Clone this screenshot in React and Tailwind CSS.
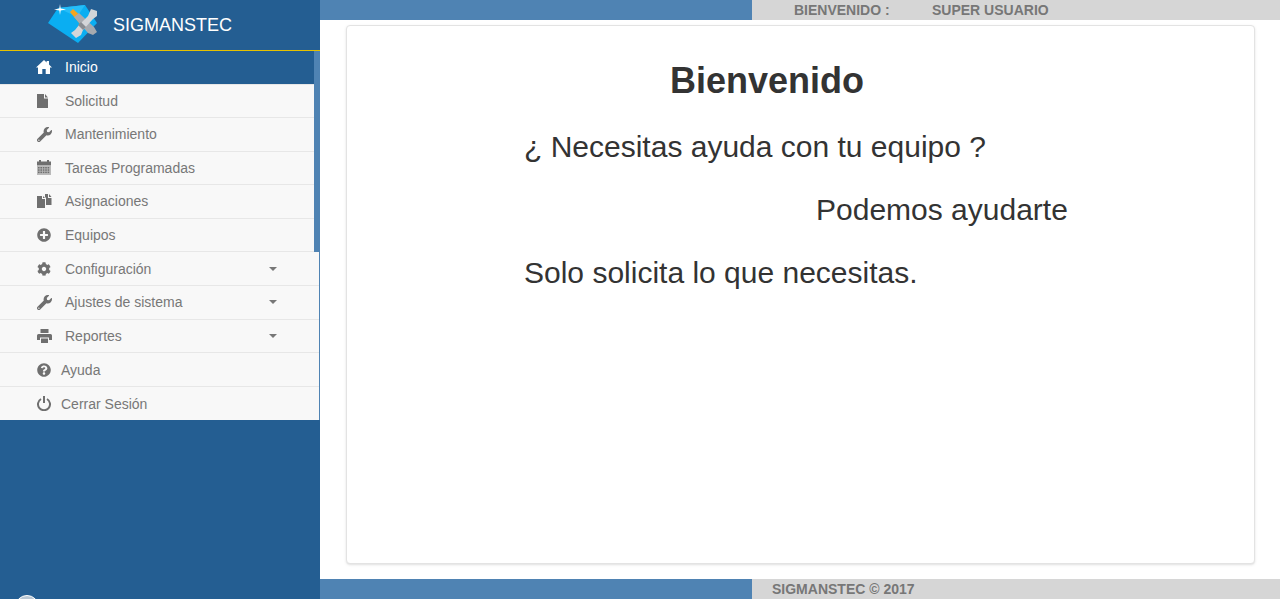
import React from "react";
import { FaWrench, FaPlusCircle, FaCog, FaQuestionCircle } from "react-icons/fa";

function HomeIcon({ className }) {
  return (
    <svg width="16" height="14" viewBox="0 0 16 14" className={className} fill="currentColor">
      <path d="M8 0 L10.6 2.4 V1 H13 V4.6 L16 7.5 H14 V14 H9.7 V9 H6.3 V14 H2 V7.5 H0 Z" />
    </svg>
  );
}

function FileIcon({ className }) {
  return (
    <svg width="12" height="14" viewBox="0 0 12 14" className={className} fill="currentColor">
      <path d="M0 0 H7 V4.5 H11 V14 H0 Z" />
      <path d="M8 0 L11 3.5 H8 Z" />
    </svg>
  );
}

function CalendarIcon({ className }) {
  const cells = [];
  for (let r = 0; r < 3; r++) {
    for (let c = 0; c < 5; c++) {
      cells.push(<rect key={`${r}-${c}`} x={1 + c * 2.4} y={7 + r * 2.3} width="1.6" height="1.5" />);
    }
  }
  return (
    <svg width="14" height="15" viewBox="0 0 14 15" className={className} fill="currentColor">
      <path d="M2 0 H4 V1.5 H10 V0 H12 V1.5 H14 V5.5 H0 V1.5 H2 Z" />
      <path d="M0 6 H14 V15 H0 Z" opacity="0.45" />
      {cells}
    </svg>
  );
}

function DuplicateIcon({ className }) {
  return (
    <svg width="15" height="14" viewBox="0 0 15 14" className={className} fill="currentColor">
      <path d="M0 2 H5 V5 H8 V14 H0 Z" />
      <path d="M6 2 L8 4 H6 Z" />
      <path d="M8 0 H11 V4 H14.5 V11 H9 V4 L8 3 Z" />
      <path d="M12 0 L14.5 3 H12 Z" />
    </svg>
  );
}

function PrintIcon({ className }) {
  return (
    <svg width="15" height="14" viewBox="0 0 15 14" className={className} fill="currentColor">
      <path d="M3.5 0 H11.5 V4 H3.5 Z" />
      <path d="M1.5 5 H13.5 Q15 5 15 6.5 V11 H12 V8.5 H3 V11 H0 V6.5 Q0 5 1.5 5 Z" />
      <path d="M4 9.5 H11 V14 H4 Z" />
    </svg>
  );
}

function PowerIcon({ className }) {
  return (
    <svg width="14" height="15" viewBox="0 0 14 15" className={className} fill="none" stroke="currentColor" strokeWidth="2">
      <path d="M4 3 A6 6 0 1 0 10 3" />
      <path d="M7 0 V7" />
    </svg>
  );
}

const topItems = [
  { label: "Solicitud", icon: <FileIcon /> },
  { label: "Mantenimiento", icon: <FaWrench size={15} /> },
  { label: "Tareas Programadas", icon: <CalendarIcon /> },
  { label: "Asignaciones", icon: <DuplicateIcon /> },
  { label: "Equipos", icon: <FaPlusCircle size={14} /> },
];

const subItems = [
  { label: "Configuración", icon: <FaCog size={14} /> },
  { label: "Ajustes de sistema", icon: <FaWrench size={15} /> },
  { label: "Reportes", icon: <PrintIcon /> },
];

function Logo() {
  return (
    <svg width="52" height="44" viewBox="0 0 52 44" className="shrink-0">
      <path d="M1 20 L11 5 L38 2 L50 20 L31 40 Z" fill="#0aaef2" />
      <path d="M11 5 L38 2 L30 14 Z" fill="#25bdf8" />
      {/* screwdriver and crossed wrenches */}
      <path d="M23 9 L26 6 L37 16 L33 21 Z" fill="#f5a51e" />
      <path d="M27 14 L32 10 L47 24 L50 29 L46 32 L41 30 Z" fill="#a6aaaf" />
      <path d="M44 6 L50 8 L50 13 L46 16 L36 27 L34 32 L29 35 L24 30 L28 27 L32 22 L41 13 Z" fill="#d3d5d8" />
      <path d="M34 19 L39 24 L36 27 L31 22 Z" fill="#888c91" />
      <path d="M13 1 L13.7 5.4 L19 6.5 L13.7 7.5 L13 12 L12.3 7.5 L7 6.5 L12.3 5.4 Z" fill="#ffffff" />
    </svg>
  );
}

function MenuRow({ item, caret = false, h = "h-[33.5px]" }) {
  return (
    <div className={`flex ${h} items-center border-b border-[#e7e7e7] pl-[37px] text-sm text-[#777]`}>
      <span className="flex w-[28px] shrink-0 text-[#6f6f6f]">{item.icon}</span>
      <span>{item.label}</span>
      {caret && <span className="ml-auto mr-[42px] h-0 w-0 border-x-4 border-t-4 border-x-transparent border-t-[#777]" />}
    </div>
  );
}

export default function App() {
  return (
    <div className="flex h-screen overflow-hidden bg-white font-['Liberation_Sans',Arial,sans-serif]">
      <aside className="flex w-[320px] shrink-0 flex-col overflow-hidden bg-[#245e92]">
        <div className="flex h-[51px] shrink-0 items-center border-b border-[#e7c200] pl-[47px]">
          <Logo />
          <span className="ml-[14px] text-lg text-white">SIGMANSTEC</span>
        </div>

        <div className="flex flex-col">
          <div className="border-r-[6px] border-[#4f83b3]">
            <div className="flex h-[33.5px] items-center border-b border-[#e7e7e7] pl-[36px] text-sm text-white">
              <span className="flex w-[29px] shrink-0">
                <HomeIcon />
              </span>
              <span>Inicio</span>
            </div>
            <div className="bg-[#f8f8f8]">
              {topItems.map((item) => (
                <MenuRow key={item.label} item={item} />
              ))}
            </div>
          </div>

          <div className="h-[168px] overflow-hidden border-r border-[#4f83b3] bg-[#f8f8f8] pt-[0.6px]">
            {subItems.map((item) => (
              <MenuRow key={item.label} item={item} caret h="h-[33.6px]" />
            ))}
            <div className="flex h-[33.6px] items-center border-b border-[#e7e7e7] pl-[37px] text-sm text-[#777]">
              <span className="flex w-[24px] shrink-0 text-[#6f6f6f]">
                <FaQuestionCircle size={14} />
              </span>
              <span>Ayuda</span>
            </div>
            <div className="flex h-[33.6px] items-center pl-[37px] text-sm text-[#777]">
              <span className="flex w-[24px] shrink-0 text-[#6f6f6f]">
                <PowerIcon />
              </span>
              <span>Cerrar Sesión</span>
            </div>
          </div>
        </div>

        <div className="mt-auto ml-[15px] h-0 w-[24px] shrink-0">
          <div className="-mt-[4px] size-[24px] rounded-full border border-white bg-[#b9c7d4]" />
        </div>
      </aside>

      <main className="flex min-w-0 flex-1 flex-col">
        <div className="flex h-[20px] shrink-0">
          <div className="w-[432px] bg-[#4f83b3]" />
          <div className="flex flex-1 items-center bg-[#d6d6d6] pl-[42px] text-sm font-bold text-[#777]">
            <span className="w-[138px]">BIENVENIDO :</span>
            <span>SUPER USUARIO</span>
          </div>
        </div>

        <div className="ml-[26px] mr-[25px] mt-[5px] h-[539px] shrink-0 rounded border border-[#e3e3e3] bg-white shadow-sm">
          <div className="flex flex-col pl-[177px] pt-[35px] text-[30px] leading-[33px] text-[#333]">
            <h1 className="ml-[146px] text-4xl leading-[40px] font-bold">Bienvenido</h1>
            <p className="mt-[29px]">¿ Necesitas ayuda con tu equipo ?</p>
            <p className="mt-[30px] ml-[292px]">Podemos ayudarte</p>
            <p className="mt-[30px]">Solo solicita lo que necesitas.</p>
          </div>
        </div>

        <div className="mt-auto flex h-[20px] shrink-0">
          <div className="w-[432px] bg-[#4f83b3]" />
          <div className="flex flex-1 items-center bg-[#d6d6d6] pl-[20px] text-sm font-bold text-[#777]">
            SIGMANSTEC © 2017
          </div>
        </div>
      </main>
    </div>
  );
}
